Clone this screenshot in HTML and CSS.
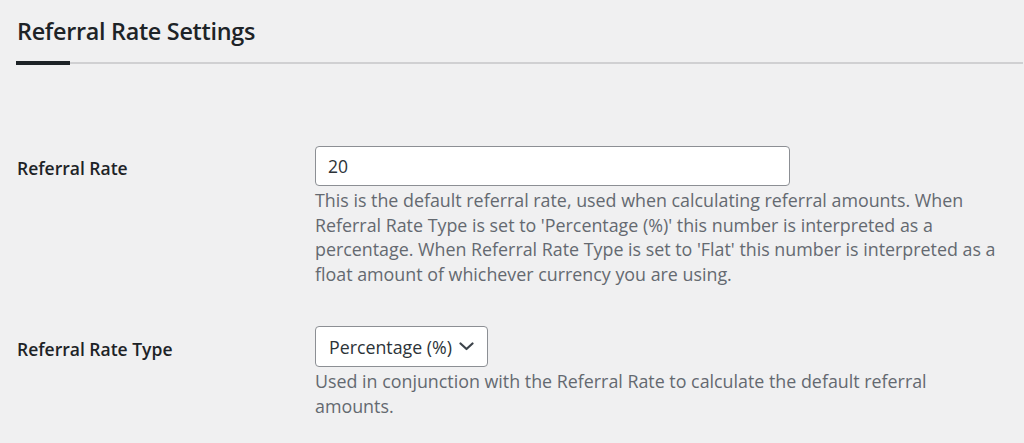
FILE: index.html
```
<!DOCTYPE html>
<html>
<head>
<meta charset="utf-8">
<link rel="stylesheet" href="styles.css">
</head>
<body>
<div class="page">
  <div class="tabs">
    <h2 class="title">Referral Rate Settings</h2>
  </div>
  <div class="form">
    <div class="row row-rate">
      <div class="label">Referral Rate</div>
      <div class="field">
        <div class="input">20</div>
        <p class="desc">This is the default referral rate, used when calculating referral amounts. When Referral Rate Type is set to 'Percentage (%)' this number is interpreted as a percentage. When Referral Rate Type is set to 'Flat' this number is interpreted as a float amount of whichever currency you are using.</p>
      </div>
    </div>
    <div class="row row-type">
      <div class="label">Referral Rate Type</div>
      <div class="field">
        <div class="select"><span>Percentage (%)</span><svg class="chev" width="15" height="9" viewBox="0 0 15 9"><path d="M1.5 1.5 L7.5 7 L13.5 1.5" fill="none" stroke="#3c434a" stroke-width="2.2" stroke-linecap="round" stroke-linejoin="round"/></svg></div>
        <p class="desc">Used in conjunction with the Referral Rate to calculate the default referral amounts.</p>
      </div>
    </div>
  </div>
</div>
</body>
</html>
```
FILE: styles.css
```
html, body { margin: 0; padding: 0; background: #f0f0f1; }
body { font-family: "Open Sans", "Noto Sans", sans-serif; color: #1d2327; }
.page { padding: 0 1px 0 16px; }
.tabs { border-bottom: 2px solid #d0d0d2; height: 64px; box-sizing: border-box; position: relative; }
.title { margin: 0; padding: 15px 0 0 1px; font-size: 23.4px; font-weight: 600; line-height: 32px; color: #1d2327; letter-spacing: -0.3px; }
.tabs::after { content: ""; position: absolute; left: 0; bottom: -3px; width: 54px; height: 4px; background: #1d2327; }
.form { padding-top: 82px; }
.row { display: flex; }
.label { width: 298px; flex: none; padding-left: 1px; font-size: 17.5px; font-weight: 600; color: #1d2327; line-height: 24px; }
.row-rate .label { padding-top: 10px; }
.row-type { margin-top: 40px; }
.row-type .label { padding-top: 11px; }
.field { flex: none; width: 692px; }
.input { width: 475px; height: 40px; box-sizing: border-box; border: 1px solid #8c8f94; border-radius: 4px; background: #fff; font-size: 17.5px; line-height: 38px; padding-left: 12px; color: #2c3338; }
.select { display: inline-flex; align-items: center; height: 41px; box-sizing: border-box; width: 173px; border: 1px solid #8c8f94; border-radius: 4px; background: #fff; font-size: 17.8px; padding-left: 13px; color: #2c3338; white-space: nowrap; }
.select span { flex: none; }
.chev { margin-left: 7px; flex: none; }
.desc { margin: 2px 0 0; font-size: 17.85px; line-height: 24.5px; color: #646970; }
```
